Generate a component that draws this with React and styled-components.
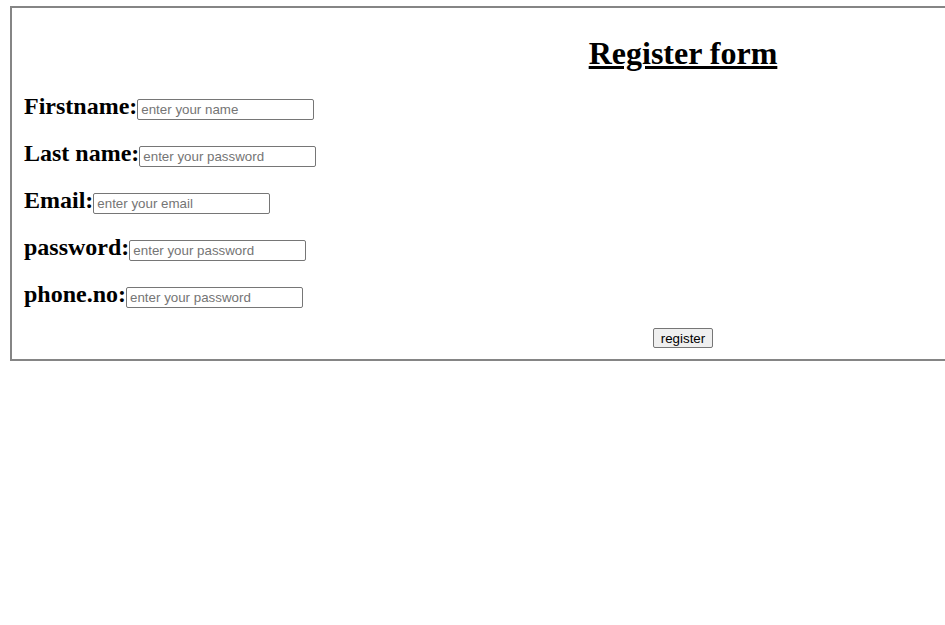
import React from 'react';
import styled, { createGlobalStyle } from 'styled-components';

const GlobalStyle = createGlobalStyle`
  html, body {
    margin: 0;
    padding: 0;
    overflow: hidden;
    background: #ffffff;
    font-family: "Liberation Serif", "Times New Roman", serif;
  }
`;

const FormBox = styled.form`
  box-sizing: content-box;
  width: 1318px;
  margin: 6px 0 0 10px;
  border: 2px solid #858585;
  padding: 0 0 11px 12px;
  display: flex;
  flex-direction: column;
`;

const Title = styled.h1`
  margin: 27px 0 21px;
  font-size: 32px;
  font-weight: bold;
  text-decoration: underline;
  text-align: center;
  line-height: normal;
`;

const Row = styled.div`
  display: flex;
  align-items: baseline;
  height: 47px;
`;

const Label = styled.label`
  font-size: 24px;
  font-weight: bold;
  color: #000;
  line-height: normal;
`;

const Input = styled.input`
  box-sizing: border-box;
  width: 177px;
  height: 21px;
  margin: 0;
  padding: 1px 3px;
  border: 1px solid #767676;
  border-radius: 2px;
  font-family: "Liberation Sans", Arial, sans-serif;
  font-size: 13.33px;
  color: #000;
  background: #fff;
  &::placeholder {
    color: #757575;
  }
`;

const Actions = styled.div`
  display: flex;
  justify-content: center;
`;

const Button = styled.button`
  box-sizing: border-box;
  height: 20px;
  padding: 0 7px;
  border: 1px solid #767676;
  border-radius: 2px;
  background: #efefef;
  font-family: "Liberation Sans", Arial, sans-serif;
  font-size: 13.33px;
  color: #000;
`;

const fields = [
  { label: 'Firstname:', type: 'text', placeholder: 'enter your name' },
  { label: 'Last name:', type: 'text', placeholder: 'enter your password' },
  { label: 'Email:', type: 'email', placeholder: 'enter your email' },
  { label: 'password:', type: 'password', placeholder: 'enter your password' },
  { label: 'phone.no:', type: 'text', placeholder: 'enter your password' },
];

export default function App() {
  return (
    <>
      <GlobalStyle />
      <FormBox onSubmit={(e) => e.preventDefault()}>
        <Title>Register form</Title>
        {fields.map((f) => (
          <Row key={f.label}>
            <Label>{f.label}</Label>
            <Input type={f.type} placeholder={f.placeholder} />
          </Row>
        ))}
        <Actions>
          <Button type="submit">register</Button>
        </Actions>
      </FormBox>
    </>
  );
}
